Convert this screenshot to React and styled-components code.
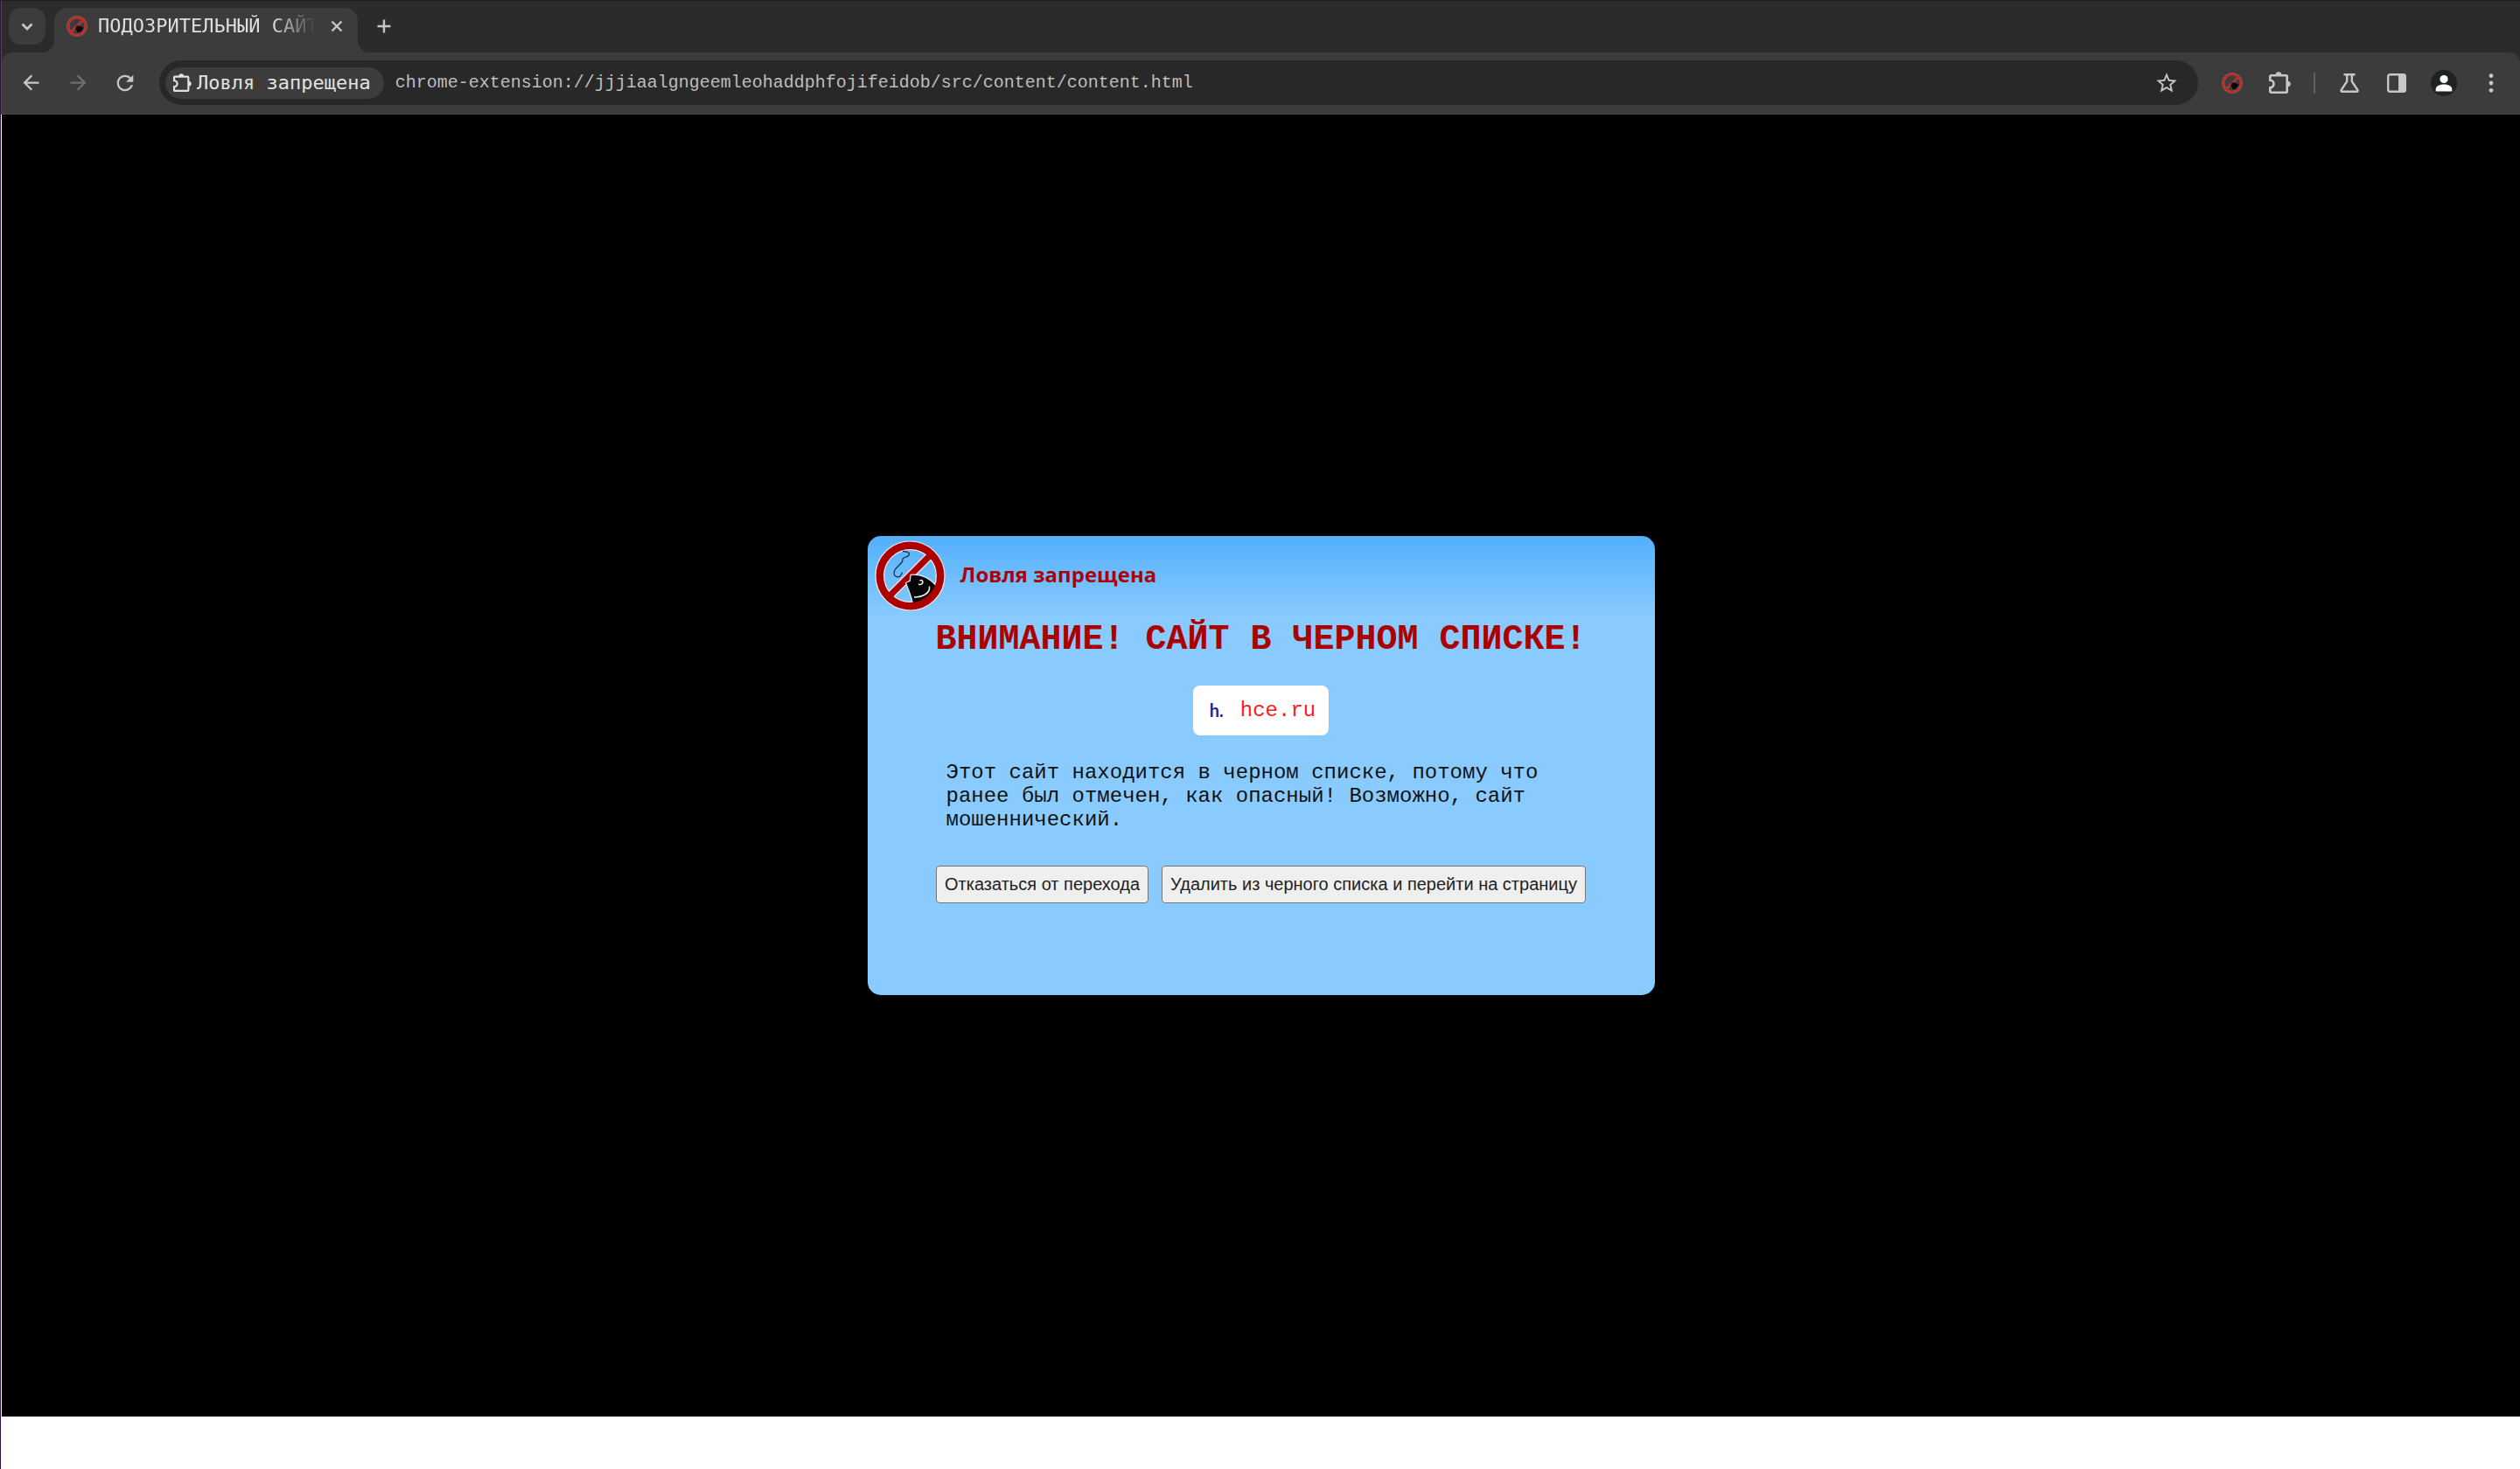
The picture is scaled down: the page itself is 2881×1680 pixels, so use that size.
import React from "react";
import styled, { createGlobalStyle } from "styled-components";

const GlobalStyle = createGlobalStyle`
  *, *::before, *::after { box-sizing: border-box; }
  body { margin: 0; background: #ffffff; }
  button, input { font: inherit; color: inherit; margin: 0; }
`;

const mono = `"Liberation Mono", "Courier New", monospace`;
const uiMono = `"DejaVu Sans Mono", "Liberation Mono", monospace`;
const sans = `"Liberation Sans", Arial, sans-serif`;

const Shell = styled.div`
  min-height: 100vh;
  display: flex;
  flex-direction: column;
  border-left: 1px solid #2f1139;
  padding-bottom: 60px;
  background: #ffffff;
`;

const Chrome = styled.header`
  background: #2b2b2b;
  border-top: 1px solid #1c1c1c;
  border-left: 1px solid #4a4a4a;
  color: #c7c7c7;
  font-family: ${uiMono};
`;

const TabStrip = styled.div`
  display: flex;
  align-items: flex-start;
  height: 59px;
  padding: 8px 8px 0;
`;

const IconButton = styled.button`
  display: flex;
  align-items: center;
  justify-content: center;
  flex: none;
  width: ${(p) => p.$width || 54}px;
  height: ${(p) => p.$height || 42}px;
  padding: 0;
  border: 0;
  border-radius: 14px;
  background: ${(p) => (p.$filled ? "#3c3c3c" : "transparent")};
  color: ${(p) => (p.$dim ? "#707070" : "#c7c7c7")};
`;

const Tab = styled.div`
  position: relative;
  display: flex;
  align-items: center;
  width: 347px;
  height: 51px;
  margin-left: 10px;
  padding: 0 10px 9px 14px;
  border-radius: 15px 15px 0 0;
  background: #3c3c3c;

  &::before,
  &::after {
    content: "";
    position: absolute;
    bottom: 0;
    width: 15px;
    height: 15px;
  }
  &::before {
    right: 100%;
    background: radial-gradient(circle at 0 0, transparent 15px, #3c3c3c 16px);
  }
  &::after {
    left: 100%;
    background: radial-gradient(circle at 100% 0, transparent 15px, #3c3c3c 16px);
  }
`;

const TabTitle = styled.span`
  flex: 1;
  margin: 0 10px 0 12px;
  overflow: hidden;
  white-space: nowrap;
  font-size: 22px;
  line-height: 30px;
  color: #dedede;
  mask-image: linear-gradient(to right, #000 80%, transparent 100%);
`;

const Toolbar = styled.div`
  display: flex;
  align-items: center;
  height: 71px;
  padding: 0 6px 1px;
  border-bottom: 1px solid #4a4a4a;
  border-radius: 12px 12px 0 0;
  background: #3c3c3c;
`;

const AddressBar = styled.form`
  flex: 1;
  display: flex;
  align-items: center;
  height: 51px;
  margin: 0 12px;
  padding: 0 9px 0 7px;
  border-radius: 26px;
  background: #282828;
`;

const Chip = styled.button`
  display: flex;
  align-items: center;
  flex: none;
  gap: 6px;
  height: 36px;
  padding: 0 15px 0 9px;
  border: 0;
  border-radius: 18px;
  background: #3c3c3c;
  color: #e2e2e2;
  font-size: 22px;
`;

const Url = styled.input`
  flex: 1;
  min-width: 0;
  height: 36px;
  padding: 0;
  margin-left: 13px;
  border: 0;
  outline: 0;
  background: transparent;
  color: #bdbdbd;
  font-family: ${mono};
  font-size: 20px;
`;

const Separator = styled.span`
  flex: none;
  width: 2px;
  height: 24px;
  margin: 0 12px;
  background: #606060;
`;

const Page = styled.main`
  flex: 1;
  display: flex;
  align-items: center;
  justify-content: center;
  margin-left: 1px;
  background: #000000;
`;

const Card = styled.section`
  width: 900px;
  max-width: 100%;
  padding: 5px 8px 105px;
  border-radius: 15px;
  background: linear-gradient(#53b0fb, #8acbff 94px);
`;

const Brand = styled.div`
  display: flex;
  align-items: center;
  gap: 17px;
`;

const BrandName = styled.span`
  padding-bottom: 4px;
  color: #a90309;
  font-family: "Open Sans", "Noto Sans", sans-serif;
  font-size: 24px;
  font-weight: 700;
  line-height: 32px;
`;

const Content = styled.div`
  display: flex;
  flex-direction: column;
  align-items: center;
  padding: 10px 0 0;
`;

const Title = styled.h1`
  margin: 0 0 29px;
  color: #aa0000;
  font-family: ${mono};
  font-size: 40px;
  font-weight: 700;
  line-height: 46px;
  text-align: center;
`;

const Site = styled.div`
  display: flex;
  align-items: center;
  gap: 15px;
  padding: 15px;
  border-radius: 8px;
  background: #ffffff;
  color: #ff1a1a;
  font-family: ${mono};
  font-size: 24px;
  line-height: 27px;
`;

const Favicon = styled.span`
  width: 24px;
  text-align: center;
  color: #26267f;
  font-family: Lato, sans-serif;
  font-size: 20px;
  font-weight: 700;
`;

const Reason = styled.p`
  width: 744px;
  max-width: 100%;
  margin: 29px 0 39px;
  padding: 0 12px;
  color: #111111;
  font-family: ${mono};
  font-size: 24px;
  line-height: 27px;
`;

const Actions = styled.div`
  display: flex;
  gap: 15px;
`;

const ActionButton = styled.button`
  height: 43px;
  padding: 0 9px;
  border: 1px solid #767676;
  border-radius: 4px;
  background: #efefef;
  color: #222222;
  font-family: ${sans};
  font-size: 20px;
  white-space: nowrap;
`;

const Svg = ({ w, h = w, box = `0 0 ${w} ${h}`, children }) => (
  <svg width={w} height={h} viewBox={box} fill="none" aria-hidden="true">
    {children}
  </svg>
);

const Chevron = () => (
  <Svg w={14}>
    <path d="M1.5 4.5 7 10l5.500-5.500" stroke="currentColor" strokeWidth="2.7" />
  </Svg>
);

const Cross = () => (
  <Svg w={14}>
    <path d="M1.500 1.500l11 11M12.500 1.500l-11 11" stroke="currentColor" strokeWidth="2.400" />
  </Svg>
);

const Plus = () => (
  <Svg w={16}>
    <path d="M8 .5v15M.5 8h15" stroke="currentColor" strokeWidth="2.400" />
  </Svg>
);

const Material = ({ d, size = 27 }) => (
  <Svg w={size} box="0 0 24 24">
    <path d={d} fill="currentColor" />
  </Svg>
);

const BACK = "M20 11H7.830l5.590-5.590L12 4l-8 8 8 8 1.410-1.410L7.830 13H20v-2z";
const FORWARD = "M12 4l-1.410 1.410L16.170 11H4v2h12.170l-5.580 5.590L12 20l8-8z";
const RELOAD =
  "M17.650 6.350C16.200 4.900 14.210 4 12 4c-4.420 0-7.990 3.580-7.990 8s3.570 8 7.990 8c3.730 0 6.840-2.550 7.730-6h-2.080c-.82 2.330-3.040 4-5.650 4-3.310 0-6-2.690-6-6s2.690-6 6-6c1.660 0 3.140.69 4.220 1.780L13 11h7V4l-2.350 2.350z";
const STAR =
  "M22 9.240l-7.190-.62L12 2 9.190 8.630 2 9.240l5.460 4.730L5.820 21 12 17.270 18.180 21l-1.630-7.030L22 9.240zM12 15.400l-3.760 2.270 1-4.280-3.320-2.880 4.380-.38L12 6.100l1.710 4.040 4.380.38-3.320 2.880 1 4.280L12 15.400z";

const Puzzle = ({ size = 25 }) => (
  <Svg w={size} box="0 0 25 25">
    <path
      d="M2.500 4.300H19.500Q20.700 4.300 20.700 5.500V22.500Q20.700 23.700 19.500 23.700H2.500Q1.300 23.700 1.300 22.500V18.200a4.200 4.200 0 0 0 0-8.400V5.500Q1.300 4.300 2.500 4.300z"
      stroke="currentColor"
      strokeWidth="2.600"
    />
    <path d="M7.700 3.600a3.300 3.300 0 0 1 6.600 0zM21.400 10.700a3.300 3.300 0 0 1 0 6.600z" fill="currentColor" />
  </Svg>
);

const Flask = () => (
  <Svg w={22}>
    <path d="M4.500 1.200h13M8.200 1.200v8L1.700 18.800q-.8 2 1.300 2h16q2.100 0 1.300-2L13.800 9.200v-8" stroke="currentColor" strokeWidth="2.400" />
  </Svg>
);

const SidePanel = () => (
  <Svg w={22}>
    <rect x="1.200" y="1.200" width="19.600" height="19.600" rx="2" stroke="currentColor" strokeWidth="2.400" />
    <path d="M13 1h7v20h-7z" fill="currentColor" />
  </Svg>
);

const Avatar = () => (
  <Svg w={30}>
    <circle cx="15" cy="15" r="15" fill="#1f2222" />
    <circle cx="15" cy="10.500" r="4.600" fill="#ffffff" />
    <path d="M5.700 24.500v-2.700c0-3.600 5.600-5.300 9.300-5.300s9.300 1.700 9.300 5.300v2.700z" fill="#ffffff" />
  </Svg>
);

const Dots = () => (
  <Svg w={6} h={22}>
    <circle cx="3" cy="2.700" r="2.400" fill="currentColor" />
    <circle cx="3" cy="11" r="2.400" fill="currentColor" />
    <circle cx="3" cy="19.300" r="2.400" fill="currentColor" />
  </Svg>
);

const BanMark = () => (
  <Svg w={24}>
    <circle cx="12" cy="12" r="10.200" stroke="#8c6a6a" strokeWidth="3" />
    <path d="M18.500 5.500l-13 13" stroke="#8c5050" strokeWidth="3" />
    <circle cx="12" cy="12" r="10" stroke="#cf1f1f" strokeWidth="1.900" />
    <path d="M18.500 5.500l-13 13" stroke="#cf1f1f" strokeWidth="1.700" />
    <path d="M11.500 11.500l3.500.3 4.500 2-3 4.200-4 1.500-.5-2.500-2-1z" fill="#080808" />
  </Svg>
);

const BanLogo = () => (
  <Svg w={81}>
    <g transform="translate(.5 .5)">
      <circle cx="40" cy="40" r="34.700" stroke="#f4e8ee" strokeWidth="10.800" />
      <path d="M64 15.500L16 63.500" stroke="#f4e8ee" strokeWidth="9.600" />
      <path d="M64 15.500L16 63.500" stroke="#ab0000" strokeWidth="7.200" />
      <path
        d="M31.500 12c4 0 7 .5 7.500 3 .3 2.500-3.500 3.500-6.500 4.500-2 1-.5 3-2 5-3 4-6.500 5.500-8.500 10-1.500 4.500 1 7 4.500 6.800 2.700-.3 3.700-3 4.500-5.300"
        stroke="#15304a"
        strokeWidth="1.300"
      />
      <path
        d="M40.700 38.800C50 38 61 41 70 51.500 66 60 58 70 43 72 41.500 63 38 56 35 48l4.700-2.200z"
        fill="#050505"
        stroke="#e8eef5"
        strokeWidth="1.200"
      />
      <circle cx="40" cy="40" r="34.700" stroke="#ab0000" strokeWidth="8.400" />
      <path d="M51 45.500q2.500-1.500 3.200.7t-1.400 3.400q-2 1-3.200-.4" stroke="#f2f2f2" strokeWidth="1.500" />
      <path d="M62 52q1 6-5 9.500t-12.500 2.800" stroke="#f2f2f2" strokeWidth="1.500" />
    </g>
  </Svg>
);

const URL_TEXT = "chrome-extension://jjjiaalgngeemleohaddphfojifeidob/src/content/content.html";

export default function App() {
  return (
    <Shell>
      <GlobalStyle />
      <Chrome>
        <TabStrip>
          <IconButton $width={42} $filled aria-label="Поиск вкладок">
            <Chevron />
          </IconButton>
          <Tab>
            <BanMark />
            <TabTitle>ПОДОЗРИТЕЛЬНЫЙ САЙТ</TabTitle>
            <IconButton $width={28} $height={28} aria-label="Закрыть вкладку">
              <Cross />
            </IconButton>
          </Tab>
          <IconButton $width={60} aria-label="Новая вкладка">
            <Plus />
          </IconButton>
        </TabStrip>
        <Toolbar>
          <IconButton aria-label="Назад">
            <Material d={BACK} />
          </IconButton>
          <IconButton $dim aria-label="Вперёд">
            <Material d={FORWARD} />
          </IconButton>
          <IconButton aria-label="Обновить">
            <Material d={RELOAD} size={28} />
          </IconButton>
          <AddressBar onSubmit={(e) => e.preventDefault()}>
            <Chip type="button">
              <Puzzle size={21} />
              Ловля запрещена
            </Chip>
            <Url aria-label="Адрес" defaultValue={URL_TEXT} spellCheck={false} />
            <IconButton type="button" aria-label="Добавить в закладки">
              <Material d={STAR} size={28} />
            </IconButton>
          </AddressBar>
          <IconButton aria-label="Ловля запрещена">
            <BanMark />
          </IconButton>
          <IconButton aria-label="Расширения">
            <Puzzle />
          </IconButton>
          <Separator />
          <IconButton aria-label="Эксперименты">
            <Flask />
          </IconButton>
          <IconButton aria-label="Боковая панель">
            <SidePanel />
          </IconButton>
          <IconButton aria-label="Профиль">
            <Avatar />
          </IconButton>
          <IconButton aria-label="Меню">
            <Dots />
          </IconButton>
        </Toolbar>
      </Chrome>
      <Page>
        <Card>
          <Brand>
            <BanLogo />
            <BrandName>Ловля запрещена</BrandName>
          </Brand>
          <Content>
            <Title>ВНИМАНИЕ! САЙТ В ЧЕРНОМ СПИСКЕ!</Title>
            <Site>
              <Favicon>h.</Favicon>
              <span>hce.ru</span>
            </Site>
            <Reason>
              Этот сайт находится в черном списке, потому что ранее был отмечен, как опасный! Возможно, сайт
              мошеннический.
            </Reason>
            <Actions>
              <ActionButton>Отказаться от перехода</ActionButton>
              <ActionButton>Удалить из черного списка и перейти на страницу</ActionButton>
            </Actions>
          </Content>
        </Card>
      </Page>
    </Shell>
  );
}
